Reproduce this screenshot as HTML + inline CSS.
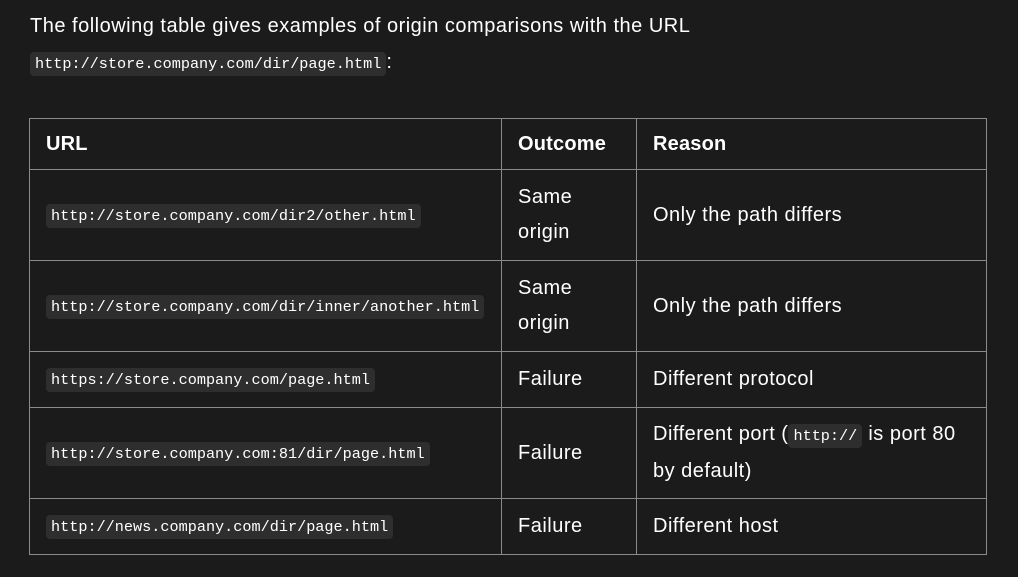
<!DOCTYPE html>
<html><head><meta charset="utf-8"><style>
body{margin:0;background:#1b1b1b;color:#fff;font-family:"Liberation Sans",sans-serif;font-size:20px;letter-spacing:0.5px;width:1018px;height:577px;overflow:hidden;position:relative}
p{position:absolute;left:30px;top:8px;margin:0;line-height:36px;width:980px;white-space:nowrap}
code{font-family:"Liberation Mono",monospace;font-size:15.2px;letter-spacing:0;background:#2e2e2e;border-radius:4px;padding:3px 5px;color:#fff}
table{position:absolute;left:29px;top:118px;border-collapse:collapse;width:958px;table-layout:fixed}
td,th{border:1px solid #8a8a8a;padding:0 16px;text-align:left;line-height:35px;vertical-align:middle;white-space:nowrap}
th{font-weight:bold;height:50px;letter-spacing:0.2px}
</style></head><body>
<p>The following table gives examples of origin comparisons with the URL<br><code>http://store.company.com/dir/page.html</code>:</p>
<table>
<colgroup><col style="width:472px"><col style="width:135px"><col></colgroup>
<tr><th>URL</th><th>Outcome</th><th>Reason</th></tr>
<tr style="height:91px"><td><code>http://store.company.com/dir2/other.html</code></td><td>Same<br>origin</td><td>Only the path differs</td></tr>
<tr style="height:91px"><td><code>http://store.company.com/dir/inner/another.html</code></td><td>Same<br>origin</td><td>Only the path differs</td></tr>
<tr style="height:56px"><td><code>https://store.company.com/page.html</code></td><td>Failure</td><td>Different protocol</td></tr>
<tr style="height:91px"><td><code>http://store.company.com:81/dir/page.html</code></td><td>Failure</td><td>Different port (<code>http://</code> is port 80<br>by default)</td></tr>
<tr style="height:56px"><td><code>http://news.company.com/dir/page.html</code></td><td>Failure</td><td>Different host</td></tr>
</table>
</body></html>
